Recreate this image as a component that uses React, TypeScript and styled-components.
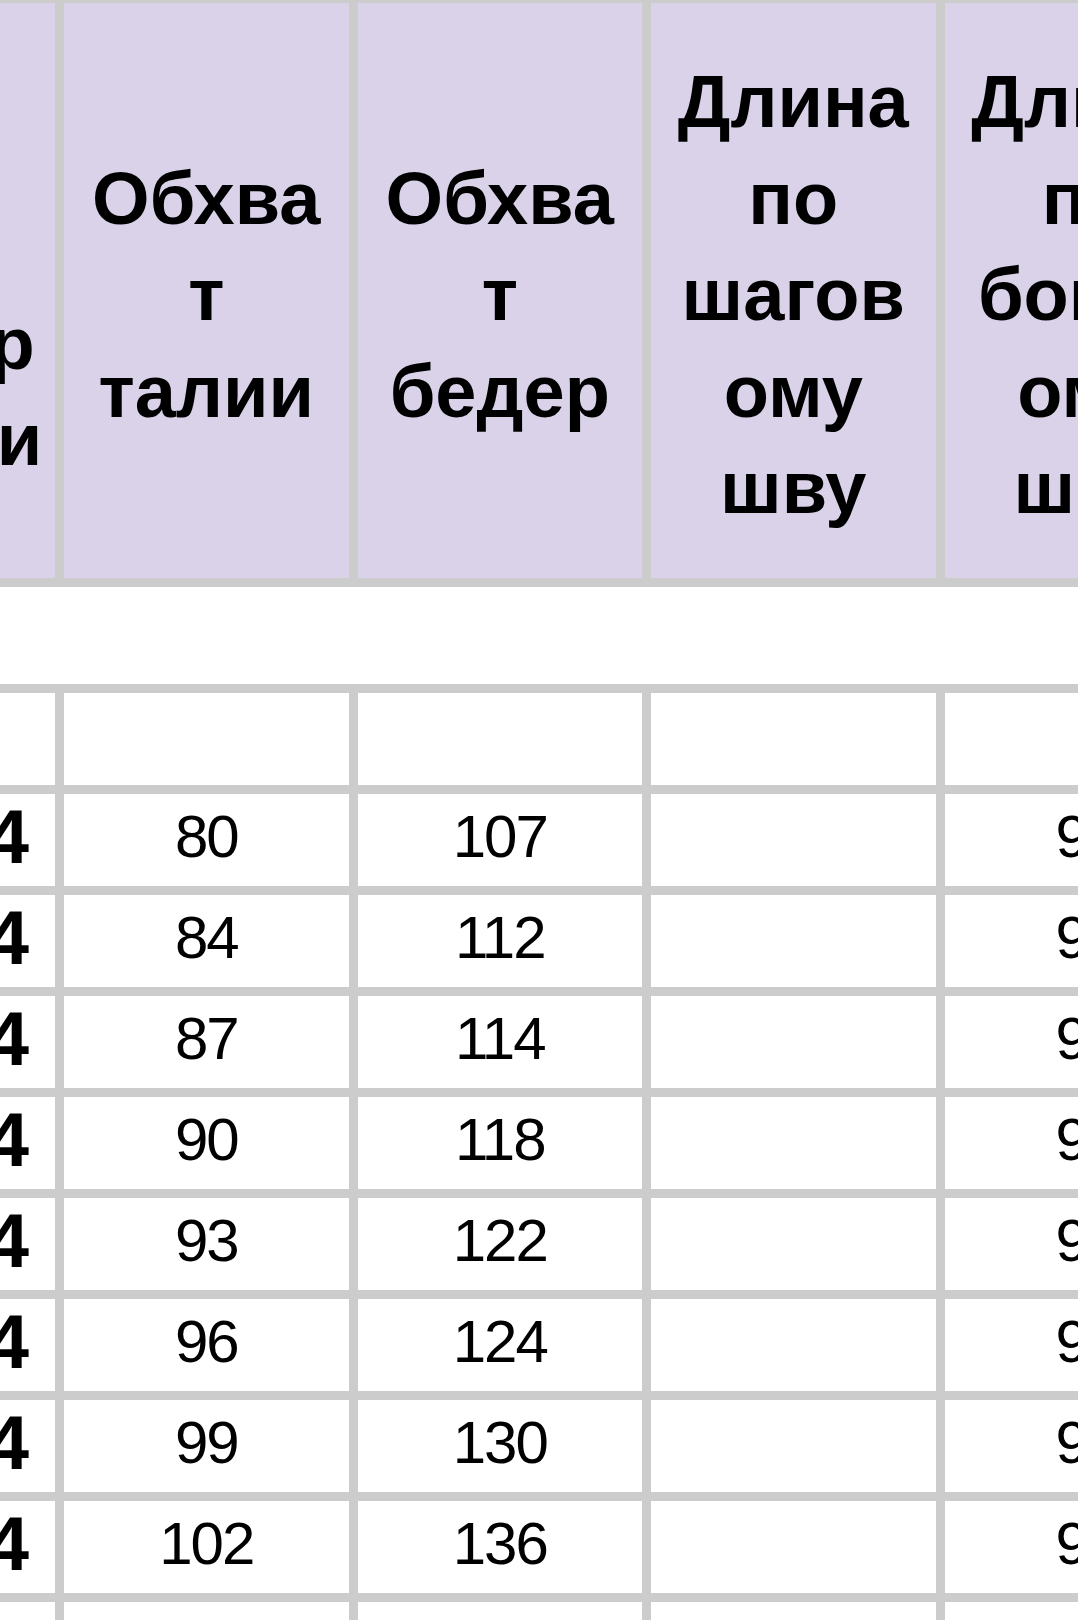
import React from "react";
import styled, { createGlobalStyle } from "styled-components";

const GlobalStyle = createGlobalStyle`
  html, body {
    margin: 0;
    padding: 0;
    background: #ffffff;
  }
  body {
    font-family: "Liberation Sans", Arial, sans-serif;
  }
`;

const headers = [
  ["Рост", "по", "размер", "модели"],
  ["Обхва", "т", "талии"],
  ["Обхва", "т", "бедер"],
  ["Длина", "по", "шагов", "ому", "шву"],
  ["Длина", "по", "боков", "ому", "шву"],
];

const rows = [
  { height: "164", waist: "80", hips: "107", side: "98" },
  { height: "164", waist: "84", hips: "112", side: "98" },
  { height: "164", waist: "87", hips: "114", side: "98" },
  { height: "164", waist: "90", hips: "118", side: "98" },
  { height: "164", waist: "93", hips: "122", side: "98" },
  { height: "164", waist: "96", hips: "124", side: "98" },
  { height: "164", waist: "99", hips: "130", side: "98" },
  { height: "164", waist: "102", hips: "136", side: "98" },
];

const App = () => {
  return (
    <>
      <GlobalStyle />
      <Viewport>
        <Sheet>
          {headers.map((lines, i) => (
            <HeaderCell key={i}>
              {lines.map((line, j) => (
                <HeaderLine key={j}>{line}</HeaderLine>
              ))}
            </HeaderCell>
          ))}

          <SpacerRow />

          {[0, 1, 2, 3, 4].map((i) => (
            <Cell key={`e${i}`} />
          ))}

          {rows.map((row, i) => (
            <React.Fragment key={i}>
              <Cell $align="right" $bold>
                {row.height}
              </Cell>
              <Cell>{row.waist}</Cell>
              <Cell>{row.hips}</Cell>
              <Cell />
              <Cell>{row.side}</Cell>
            </React.Fragment>
          ))}

          {[0, 1, 2, 3, 4].map((i) => (
            <Cell key={`t${i}`} />
          ))}
        </Sheet>
      </Viewport>
    </>
  );
};

export default App;

const Viewport = styled.div`
  width: 1078px;
  height: 1620px;
  overflow: hidden;
  background: #ffffff;
`;

const Sheet = styled.div`
  display: grid;
  grid-template-columns: 304px repeat(4, 284.5px);
  grid-template-rows: 575px 97px repeat(10, 92px);
  gap: 9px;
  padding: 9px;
  width: max-content;
  margin: -6px 0 0 -258px;
  background: #cccccc;
`;

const HeaderCell = styled.div`
  background: #dad2e8;
  display: flex;
  flex-direction: column;
  align-items: center;
  justify-content: center;
  padding-top: 10px;
  box-sizing: border-box;
  font-family: "Liberation Sans", Arial, sans-serif;
  font-weight: 700;
  font-size: 74px;
  line-height: 96.5px;
  color: #000000;
  white-space: nowrap;
`;

const HeaderLine = styled.span`
  display: block;
  text-align: center;
`;

const SpacerRow = styled.div`
  grid-column: 1 / -1;
  background: #ffffff;
`;

const Cell = styled.div<{ $align?: "center" | "right"; $bold?: boolean }>`
  background: #ffffff;
  display: flex;
  align-items: center;
  justify-content: ${(p) => (p.$align === "right" ? "flex-end" : "center")};
  padding: 0 ${(p) => (p.$align === "right" ? "26px" : "0")} 7px 0;
  box-sizing: border-box;
  font-family: "Liberation Sans", Arial, sans-serif;
  font-weight: ${(p) => (p.$bold ? 700 : 400)};
  font-size: ${(p) => (p.$bold ? "76px" : "60px")};
  letter-spacing: ${(p) => (p.$bold ? "0" : "-2px")};
  color: #000000;
  white-space: nowrap;
`;
